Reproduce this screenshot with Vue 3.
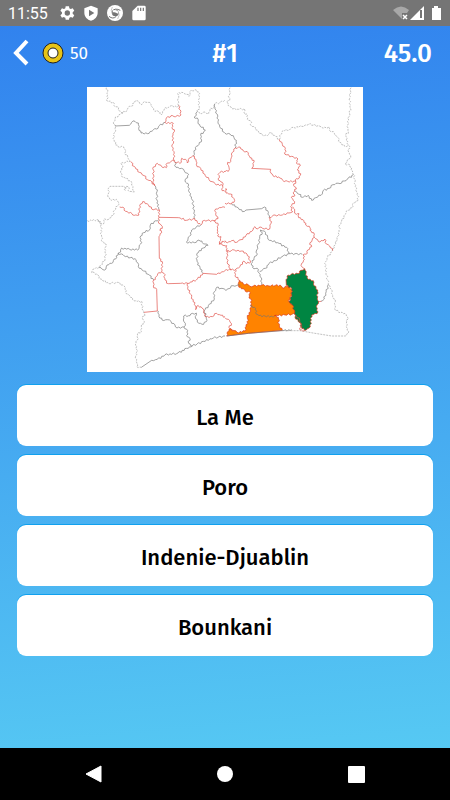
<template>
  <div class="screen">
    <div class="status-bar">
      <span class="clock">11:55</span>
      <svg class="status-icon" viewBox="0 0 24 24" aria-hidden="true">
        <path fill="#fff" fill-rule="evenodd" d="M20.500 13.300a9 9 0 0 0 0-2.600l2.400-1.900-2.300-4-2.900 1.200a9 9 0 0 0-2.200-1.300L15 1.700h-5l-.5 3a9 9 0 0 0-2.200 1.300L4.400 4.800l-2.300 4 2.400 1.900a9 9 0 0 0 0 2.600l-2.400 1.900 2.300 4L7.300 18a9 9 0 0 0 2.200 1.300l.5 3h5l.5-3a9 9 0 0 0 2.200-1.300l2.900 1.200 2.300-4zM12.500 16a4 4 0 1 1 0-8 4 4 0 0 1 0 8z" />
      </svg>
      <svg class="status-icon" viewBox="0 0 24 24" aria-hidden="true">
        <path fill="#fff" fill-rule="evenodd" d="M12 1L2 5v6.500C2 17.500 6.500 22 12 23.500c5.500-1.500 10-6 10-12V5zM9 7l8 5-8 5z" />
      </svg>
      <svg class="status-icon" viewBox="0 0 24 24" aria-hidden="true">
        <circle cx="12" cy="12" r="12" fill="#fff" />
        <circle cx="12.500" cy="12" r="5" fill="#757575" />
        <path d="M8 9Q12 4 20 8M14 17Q9 22 3 17" fill="none" stroke="#757575" stroke-width="1.500" />
        <path d="M17 10q3 5-1 11M7.500 13Q5 8 8 3" fill="none" stroke="#aaa" />
        <path d="M9 8q5-2 8 2l-1 3q-3-3-7-2z" fill="#fff" />
      </svg>
      <svg class="status-icon" viewBox="0 0 24 24" aria-hidden="true">
        <path fill="#fff" d="M10 1h10a2 2 0 0 1 2 2v18a2 2 0 0 1-2 2H4a2 2 0 0 1-2-2V9z" />
        <path d="M10.500 4v5M14.500 4v5M18.500 4v5" stroke="#757575" stroke-width="1.800" />
      </svg>
      <svg class="signals" viewBox="0 0 50 16" aria-hidden="true">
        <path d="M1 5Q9-2 17 5l-2 3h-5v6z" fill="#a8a8a8" />
        <path d="M11 10l4 4M15 10l-4 4" stroke="#fff" stroke-width="1.500" />
        <path d="M18 15L32 1v14z" fill="#fff" />
        <path d="M29 5v8" stroke="#757575" stroke-width="2" />
        <path d="M42 1h4v2h3v12h-9V3h2z" fill="#fff" />
      </svg>
    </div>

    <header class="top-bar">
      <div class="left">
        <button class="back" type="button" aria-label="Back">
          <svg viewBox="0 0 18 28"><path d="M15 2L4 14l11 11" fill="none" stroke="#fff" stroke-width="4" /></svg>
        </button>
        <svg class="coin" viewBox="0 0 22 22" aria-hidden="true">
          <circle cx="11" cy="11" r="10" fill="#e6c318" stroke="#222" />
          <circle cx="11" cy="11" r="5" fill="#fff" stroke="#222" />
        </svg>
        <span class="coins">{{ coins }}</span>
      </div>
      <h1 class="round">#{{ round }}</h1>
      <span class="timer">{{ timeLeft }}</span>
    </header>

    <main class="game">
      <svg class="map" viewBox="6 6 828 855" role="img" aria-label="Map">
        <rect x="6" y="6" width="828" height="855" fill="#fff" />
        <g v-for="(part, i) in mapParts" :key="i" :transform="part.shift">
          <path v-for="(area, j) in part.areas" :key="'a' + j" :d="border(area.points) + 'Z'" :fill="area.fill" class="area" />
          <path v-for="(line, j) in part.outer" :key="'o' + j" :d="border(line)" class="line outer" />
          <path v-for="(line, j) in part.grey" :key="'g' + j" :d="border(line)" class="line grey" />
          <path v-for="(line, j) in part.red" :key="'r' + j" :d="border(line)" class="line red" />
        </g>
      </svg>

      <div class="answers">
        <button v-for="answer in answers" :key="answer" class="answer" type="button">{{ answer }}</button>
      </div>
    </main>

    <nav class="nav-bar">
      <button type="button" aria-label="Back">
        <svg viewBox="0 0 20 20"><path d="M17 2v16L2 10z" fill="#fff" stroke="#fff" stroke-linejoin="round" /></svg>
      </button>
      <button type="button" aria-label="Home">
        <svg viewBox="0 0 20 20"><circle cx="10" cy="10" r="8" fill="#fff" /></svg>
      </button>
      <button type="button" aria-label="Recent apps">
        <svg viewBox="0 0 20 20"><rect x="2" y="2" width="17" height="17" rx="1" fill="#fff" /></svg>
      </button>
    </nav>
  </div>
</template>

<script setup>
import { ref } from 'vue'

const coins = ref(50)
const round = ref(1)
const timeLeft = ref('45.0')
const answers = ['La Me', 'Poro', 'Indenie-Djuablin', 'Bounkani']

// region borders, one entry per quarter of the map
const mapParts = [
  {
    shift: 'translate(0 0)',
    outer: [
      '64,8 68,20 66,48 85,52 91,66 101,68 103,78 114,84 125,77 130,67 138,64 150,48 162,50 170,59 178,50 188,52 198,58 206,75 220,79 229,89 238,72 250,67 263,62 275,66 281,61',
      '281,61 278,47 281,38 278,26 290,22 305,28 312,34 318,16 330,14 341,21 343,34 341,50 343,68 337,80 350,86 360,81 371,86 375,74 386,68 389,56 405,52 420,45',
      '114,84 101,90 90,102 86,118 92,125 92,137 85,150 88,170 99,185 116,186 122,195 119,205 128,215 135,228 122,232 107,236 114,246 107,258 109,272 122,280 136,287 141,295 143,310 148,320 133,320 130,305 123,304 121,316 116,304 75,304 70,310 71,324 69,336 79,346 94,343 101,353 98,363 88,376 84,391 71,403 59,401 57,415 48,416 40,405 7,407',
      '40,405 48,420 49,435',
    ],
    grey: [
      '90,123 133,121 140,112 150,109 160,114 161,130 168,139 168,144 187,146 205,135 215,132 223,122 240,112',
      '337,80 334,90 327,97 337,99 339,111 345,123 361,135 356,141 347,150 350,165 342,178 331,188 325,213',
      '389,58 390,72 397,88 399,110 407,130 420,145',
      '210,302 216,320 216,345 221,373',
      '270,230 273,247 290,250 298,258 311,269 303,280 301,291 311,300 313,322 322,345 328,380 329,401',
      '221,405 207,410 196,420 193,435',
      '320,435 333,428 348,419',
    ],
    red: [
      '281,61 286,75 288,90 272,95 258,92 244,99 240,112 265,115 261,128 268,140 262,155 266,170 261,185 267,200 266,218 268,226',
      '268,226 247,234 244,248 230,245 217,235 205,246 206,270 204,290 209,302 201,291 187,284 177,272 163,262 147,244 137,229',
      '268,226 271,233 289,232 290,220 302,223 307,234 313,219 323,213 333,223 334,239 347,250 361,272 372,284 390,296 413,302 412,292 401,286 403,278 399,268 405,262 420,258',
      '413,302 410,312 420,320',
      '104,366 118,370 122,379 141,386 148,391 162,390 164,362 173,350 186,356 200,372 223,374 222,397 280,398 304,406 329,401 337,412 348,419 358,406 386,407 399,401 392,388 392,372 403,368 420,367',
      '222,397 220,410 228,420 232,430 226,435',
      '386,407 400,420 397,435',
    ],
  },
  {
    shift: 'translate(420 0)',
    outer: [
      '15,8 13,30 14,46 5,52 14,64 24,72 42,73 58,71 60,88 68,90 67,103 76,107 79,123 91,128 101,141 112,150 127,152 134,143 148,151 163,163',
      '163,163 167,148 174,137 187,136 206,127 230,124 251,118 279,122 290,127 304,129 311,125 314,137 328,145 339,158 345,172 359,184 370,181',
      '378,8 374,40 376,70 372,95 368,120 370,140 362,150 370,180 374,190 369,198 377,212 372,222 360,236 375,240 385,268 390,290 395,320 400,346 391,350 385,355 382,368 368,376 360,388 350,408 344,420 344,435',
    ],
    grey: [
      '0,145 15,147 27,158 34,166 31,189',
      '210,318 222,328 232,337 249,331 260,346 272,338 288,331 295,316 312,310 324,299 333,295 345,296 358,288 370,280 385,269',
      '20,356 35,366 52,380 63,375 110,371 118,366 128,377 133,398',
    ],
    red: [
      '31,189 46,187 55,198 70,204 75,218 87,226 85,240 80,250 137,253 138,265 148,275 161,276 173,286 188,289 212,289',
      '163,163 172,178 181,190 180,208 200,214 219,222 214,234 226,242 217,255 227,266 223,279 214,281 212,289',
      '31,189 22,202 19,218 17,230 8,232 12,247 10,259 0,260',
      '0,312 5,312 3,324 16,327 27,341 27,352 20,356 0,355',
      '212,289 206,302 214,312 205,322 210,330 199,338 209,350 197,365 203,380 192,384 172,390 150,390 133,398',
      '203,365 209,378 214,388 222,386 221,398 234,404 242,420 253,424 258,435',
      '133,398 138,415 134,432 118,432 108,426 98,432 90,425 84,435',
    ],
  },
  {
    shift: 'translate(0 435)',
    outer: [
      '47,0 50,20 52,35 63,42 61,52 61,70 60,88 48,107 42,112 25,117 20,128 36,132 47,147 72,161 98,157 113,165 121,173 124,191 134,197 143,209 157,214 170,214 173,240 179,252 172,265 178,275 169,290 169,305 157,312 157,330 151,345 157,360 152,378 156,400 155,410 169,412',
    ],
    grey: [
      '193,0 176,8 167,18 167,42 158,60 134,58 110,54 107,66 99,70 95,83 85,92 80,100 66,105 63,117 52,118 42,112',
      '99,70 114,74 122,80 150,86 158,98 160,110 176,123 194,136 206,150',
      '220,243 222,260 231,270 247,269 258,274 270,285 276,294 297,291',
      '297,291 301,280 295,270 296,258 315,257 322,250 334,249 332,266 342,280 356,283 364,275 364,262 357,243',
      '297,291 308,302 305,316 315,325 311,340 322,348',
      '169,412 200,391 217,388 240,374 275,371 305,355 322,348 355,334 385,324 420,318',
      '320,0 314,18 304,36 328,38 342,30 352,38 369,46 355,54 336,70 336,95 345,112 354,130',
      '357,243 370,227 388,207 388,185 395,172 408,175 420,178',
    ],
    red: [
      '223,0 230,8 222,20 223,85 232,95 230,125 237,130 240,150 250,161 287,160 308,160 334,150 354,130 395,133 420,122',
      '230,125 218,132 214,140 206,150 205,168 215,178 217,243 177,247',
      '308,160 308,175 320,200 332,228 332,239 335,229 348,230 357,243 362,261 382,260 395,250 408,256 420,260',
      '397,0 398,18 408,20 403,36 413,46 420,47',
      '420,37 411,34 403,44',
    ],
  },
  {
    shift: 'translate(420 435)',
    areas: [
      { fill: '#ff8300', points: '44,151 60,165 70,164 75,169 110,165 132,168 165,165 173,174 190,167 198,178 200,195 194,203 192,216 206,228 211,252 180,255 148,257 160,262 163,288 172,301 70,310 5,318 8,305 18,296 36,307 60,303 63,284 69,280 67,262 76,240 80,212 72,204 76,188 61,184 54,176 42,172 40,160' },
      { fill: '#008542', points: '183,149 186,138 198,133 224,129 228,121 239,116 243,130 250,148 265,152 267,167 278,180 277,205 281,214 276,225 276,251 260,255 256,290 244,300 231,296 224,278 210,262 208,240 202,225 192,214 200,194 200,175 184,166' },
    ],
    outer: [
      '342,0 339,18 332,40 322,62 308,80 302,95 303,130 310,160 319,178 323,200 331,215 329,236 346,248 360,250 368,262 364,280 370,310 362,318 320,318 264,309 225,302 172,302',
    ],
    grey: [
      '118,3 106,0 112,8 104,20 100,42 95,60 97,72 87,85 79,101 83,113 100,118 103,130 108,142 110,164',
      '118,3 128,22 133,31 158,38 185,52 192,71 170,80 152,92 132,100 121,115 104,124',
      '192,71 210,71 232,73',
      '0,180 12,176 24,167 46,166',
      '76,227 92,235 92,248 102,257 120,258 148,260',
      '5,318 70,310 172,302 200,299',
      '310,164 302,190 298,207 288,214',
    ],
    red: [
      '0,32 8,38 20,32 35,37 48,29 63,16 84,0',
      '0,48 5,47 5,65 28,60 50,63 66,72 77,96 65,101 57,93 45,110 32,118 18,120 8,102 6,80 8,62',
      '18,120 0,121',
      '32,118 30,138 44,151',
      '0,263 10,268 19,280 12,293 22,304',
      '254,0 268,14 268,22 280,34 293,32 299,27 304,42 314,48 323,62',
      '268,22 255,38 260,50 248,60 247,70 234,75 238,88 230,100 232,112 239,118',
      '280,215 289,214',
      '210,254 224,270 230,286 225,300 238,302',
    ],
  },
]

// small sideways steps, repeated along a border to keep it from looking ruled
const steps = [2, -1, 1, -3, 2, 0, -2, 3, -1, 2, -2]

/**
 * Turn "x,y x,y ..." into a path with an uneven line between the points
 */
const border = (line) => {
  const points = line.split(' ').map((p) => p.split(',').map(Number))
  let d = `M${points[0]}`
  let n = points[0][0]
  for (let i = 1; i < points.length; i++) {
    const [x1, y1] = points[i - 1]
    const [x2, y2] = points[i]
    const length = Math.hypot(x2 - x1, y2 - y1)
    // long straight runs stay straight
    const parts = length > 36 ? 1 : Math.max(1, Math.round(length / 5))
    for (let k = 1; k < parts; k++) {
      const step = steps[n++ % steps.length] / length
      const x = x1 + ((x2 - x1) * k) / parts - (y2 - y1) * step
      const y = y1 + ((y2 - y1) * k) / parts + (x2 - x1) * step
      d += `L${x.toFixed(1)},${y.toFixed(1)}`
    }
    d += `L${x2},${y2}`
  }
  return d
}
</script>

<style scoped>
.screen {
  min-height: 100vh;
  display: flex;
  flex-direction: column;
  background: linear-gradient(175deg, #3080ee 0%, #56c9f3 94%);
  font-family: 'Fira Sans', 'Noto Sans', 'Open Sans', sans-serif;
  color: #fff;
}

button {
  border: 0;
  padding: 0;
  background: none;
  font-family: inherit;
  cursor: pointer;
}

svg {
  display: block;
}

.status-bar {
  height: 26px;
  padding: 0 8px;
  display: flex;
  align-items: center;
  gap: 8px;
  background: #757575;
}

.clock {
  margin-right: 3px;
  padding-top: 2px;
  font-family: Roboto, sans-serif;
  font-size: 16px;
  line-height: 24px;
}

.status-icon {
  width: 16px;
  height: 16px;
}

.signals {
  width: 50px;
  height: 16px;
  margin-left: auto;
}

.top-bar {
  height: 54px;
  padding: 0 12px;
  display: grid;
  grid-template-columns: 1fr auto 1fr;
  align-items: center;
}

.left {
  display: flex;
  align-items: center;
}

.back svg {
  width: 18px;
  height: 28px;
}

.coin {
  width: 22px;
  height: 22px;
  margin: 0 6px 0 12px;
}

.coins {
  font-size: 17px;
}

.round,
.timer {
  margin: 0;
  padding-top: 2px;
  font-size: 26px;
  font-weight: 500;
  line-height: 32px;
}

.timer {
  padding-right: 6px;
  text-align: right;
}

.game {
  flex: 1;
  padding: 7px 17px 0;
}

.map {
  width: calc(100% - 140px);
  margin: 0 auto 13px;
}

.area {
  stroke: #d8361c;
  stroke-width: 2;
}

.line {
  fill: none;
  stroke-width: 2;
  stroke-linejoin: round;
}

.outer {
  stroke: #a0a0a0;
  stroke-dasharray: 6 3;
}

.grey {
  stroke: #747474;
}

.red {
  stroke: #e04a42;
}

.answers {
  display: flex;
  flex-direction: column;
  gap: 9px;
}

.answer {
  height: 61px;
  padding-top: 3px;
  border-radius: 9px;
  background: #fff;
  box-shadow: 0 -1px 0 #10a0ee;
  color: #000;
  font-size: 22px;
  font-weight: 500;
}

.nav-bar {
  height: 52px;
  padding: 0 29px;
  display: flex;
  justify-content: space-around;
  align-items: center;
  background: #000;
}

.nav-bar svg {
  width: 20px;
  height: 20px;
}
</style>

<style>
body {
  margin: 0;
}
</style>
